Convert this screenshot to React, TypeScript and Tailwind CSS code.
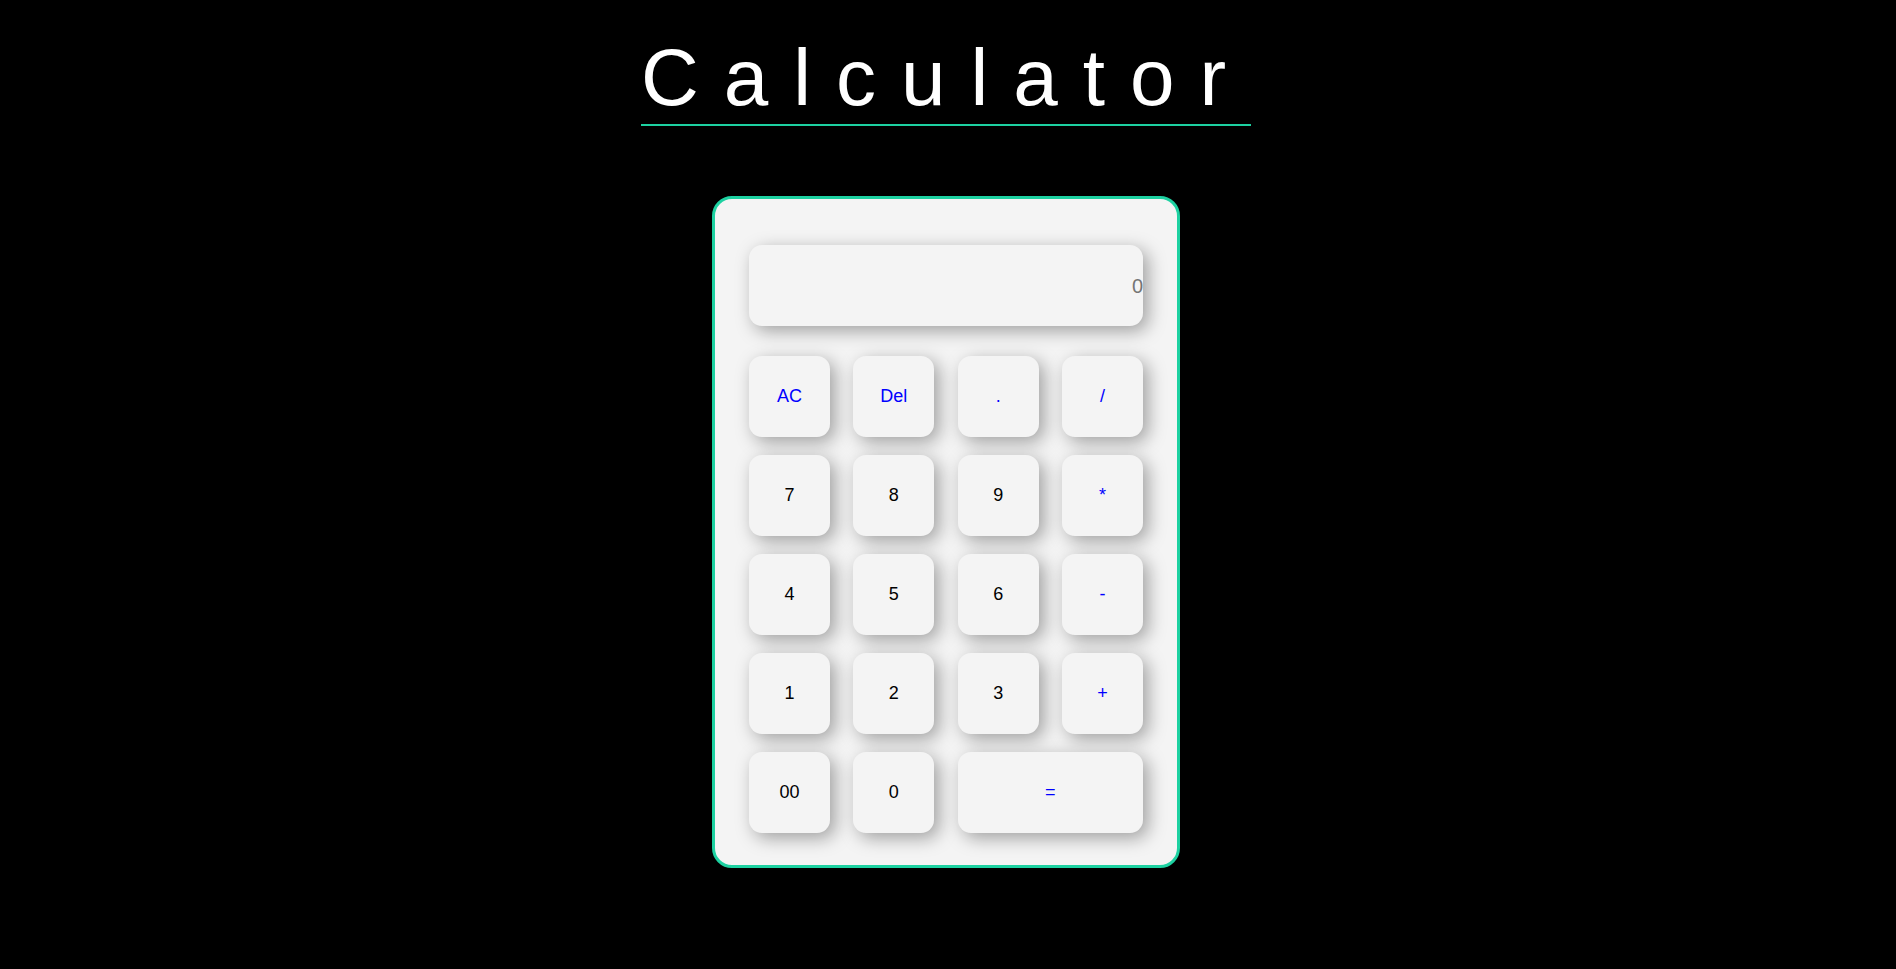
import React from "react";

const keys: { label: string; op?: boolean; wide?: boolean }[] = [
    { label: "AC", op: true },
    { label: "Del", op: true },
    { label: ".", op: true },
    { label: "/", op: true },
    { label: "7" },
    { label: "8" },
    { label: "9" },
    { label: "*", op: true },
    { label: "4" },
    { label: "5" },
    { label: "6" },
    { label: "-", op: true },
    { label: "1" },
    { label: "2" },
    { label: "3" },
    { label: "+", op: true },
    { label: "00" },
    { label: "0" },
    { label: "=", op: true, wide: true },
];

export default function App() {
    return (
        <div className="min-h-[969px] w-full bg-black pr-[4px] flex flex-col items-center font-['Liberation_Sans',Arial,sans-serif]">
            <h1 className="mt-[32px] inline-block text-white text-[80px] leading-[92px] font-normal tracking-[25px] border-b-2 border-[#1dd1a1]">
                Calculator
            </h1>

            <div className="mt-[70px] w-[468px] rounded-[20px] border-[3px] border-[#1dd1a1] bg-[#f4f4f4] pt-[46px] px-[34px] pb-[32px]">
                <div className="h-[81px] rounded-[13px] bg-[#f4f4f4] shadow-[5px_5px_18px_rgba(0,0,0,0.35)] flex items-center justify-end text-[20px] text-[#757575]">
                    0
                </div>

                <div className="mt-[30px] grid grid-cols-[repeat(4,81px)] justify-between gap-y-[18px]">
                    {keys.map((k) => (
                        <button
                            key={k.label}
                            className={
                                "h-[81px] rounded-[13px] bg-[#f4f4f4] shadow-[5px_5px_18px_rgba(0,0,0,0.35)] text-[18px] flex items-center justify-center " +
                                (k.op ? "text-[#0000ff] " : "text-black ") +
                                (k.wide ? "col-span-2" : "")
                            }
                        >
                            {k.label}
                        </button>
                    ))}
                </div>
            </div>
        </div>
    );
}
